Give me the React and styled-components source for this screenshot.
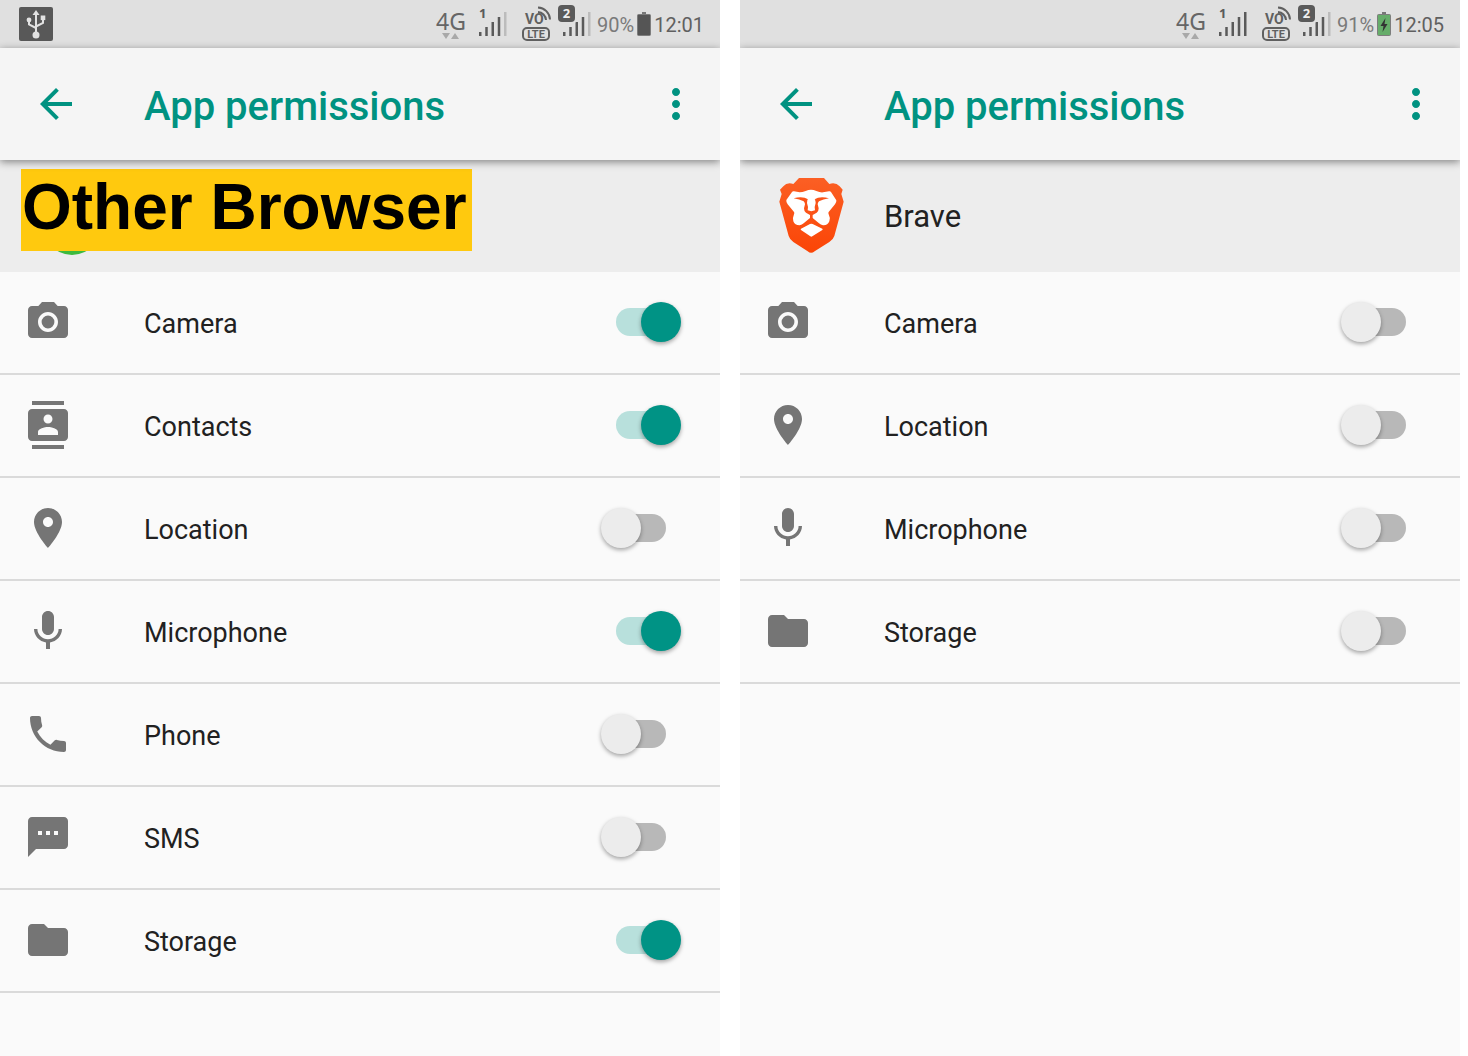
import React from "react";
import styled, { createGlobalStyle } from "styled-components";

const GlobalStyle = createGlobalStyle`
  * { box-sizing: border-box; }
  body {
    margin: 0;
    background: #ffffff;
    color: #212121;
    font-family: Roboto, "Noto Sans", sans-serif;
  }
`;

const Page = styled.main`
  display: grid;
  grid-template-columns: 1fr 1fr;
  gap: 20px;
  min-height: 100vh;
  padding-right: 8px;
`;

const Screen = styled.section`
  display: flex;
  flex-direction: column;
  background: #fafafa;
  overflow: hidden;
`;

const StatusBar = styled.div`
  display: flex;
  align-items: center;
  gap: 3px;
  height: 48px;
  padding: 0 16px 0 19px;
  background: #e0e0e0;
  color: #666666;
  font-size: 20px;
  line-height: 24px;
`;

const Notifications = styled.div`
  display: flex;
  margin-right: auto;
`;

const StatusText = styled.span`
  padding-top: 2px;
  color: ${(p) => (p.$muted ? "#7a7a7a" : "#606060")};
`;

const NetworkType = styled.span`
  display: flex;
  flex-direction: column;
  align-items: center;
  width: 32px;
  padding-top: 2px;
  color: #666666;
  font-family: "Noto Sans", sans-serif;
  font-size: 23px;
  line-height: 23px;
`;

const AppBar = styled.header`
  display: flex;
  align-items: center;
  height: 112px;
  padding: 0 20px 0 32px;
  background: #f5f5f5;
  box-shadow: 0 2px 8px rgba(0, 0, 0, 0.45);
  z-index: 1;
`;

const IconButton = styled.button`
  display: flex;
  padding: 0;
  border: 0;
  background: none;
  color: #009281;
  cursor: pointer;
`;

const Title = styled.h1`
  flex: 1;
  margin: 0;
  padding: 6px 0 0 64px;
  color: #009281;
  font-size: 40px;
  font-weight: 500;
  line-height: 48px;
`;

const AppHeader = styled.div`
  position: relative;
  display: flex;
  align-items: center;
  height: 112px;
  padding-left: 39px;
  background: #ededed;
`;

const AppName = styled.h2`
  margin: 0;
  padding: 2px 0 0 39px;
  font-size: 31px;
  font-weight: 400;
  line-height: 40px;
`;

const GreenLogo = styled.span`
  width: 66px;
  height: 77px;
  border-radius: 50%;
  background: #3dba3d;
`;

const Banner = styled.strong`
  position: absolute;
  top: 9px;
  left: 21px;
  height: 82px;
  padding: 0 5px 0 1px;
  background: #ffc90e;
  color: #000000;
  font-family: "Liberation Sans", Arial, sans-serif;
  font-size: 64px;
  font-weight: 700;
  line-height: 76px;
  white-space: nowrap;
`;

const List = styled.ul`
  margin: 0;
  padding: 0;
  list-style: none;
`;

const Row = styled.label`
  display: flex;
  align-items: center;
  height: 103px;
  padding: 0 54px 1px 24px;
  border-bottom: 2px solid #dadada;
  color: #757575;
  cursor: pointer;
`;

const RowLabel = styled.span`
  flex: 1;
  padding: 4px 0 0 72px;
  color: #212121;
  font-size: 27px;
  line-height: 32px;
`;

const Switch = styled.input`
  position: relative;
  appearance: none;
  width: 50px;
  height: 28px;
  margin: 0;
  border-radius: 14px;
  background: #b8b8b8;
  cursor: pointer;

  &::before {
    content: "";
    position: absolute;
    top: -6px;
    left: -15px;
    width: 40px;
    height: 40px;
    border-radius: 50%;
    background: #ececec;
    box-shadow: 0 2px 4px rgba(0, 0, 0, 0.35);
  }

  &:checked {
    background: #b8e0dc;
  }

  &:checked::before {
    left: 25px;
    background: #009385;
  }
`;

const materialPaths = {
  back: "M20 11H7.83l5.59-5.59L12 4l-8 8 8 8 1.41-1.41L7.83 13H20v-2z",
  more: "M12 8c1.1 0 2-.9 2-2s-.9-2-2-2-2 .9-2 2 .9 2 2 2zm0 2c-1.1 0-2 .9-2 2s.9 2 2 2 2-.9 2-2-.9-2-2-2zm0 6c-1.1 0-2 .9-2 2s.9 2 2 2 2-.9 2-2-.9-2-2-2z",
  camera:
    "M12 8.8a3.2 3.2 0 1 0 0 6.4a3.2 3.2 0 1 0 0-6.4zM9 2L7.17 4H4c-1.1 0-2 .9-2 2v12c0 1.1.9 2 2 2h16c1.1 0 2-.9 2-2V6c0-1.1-.9-2-2-2h-3.17L15 2H9zm3 15c-2.76 0-5-2.24-5-5s2.24-5 5-5 5 2.24 5 5-2.24 5-5 5z",
  contacts:
    "M20 0H4v2h16V0zM4 24h16v-2H4v2zM20 4H4c-1.1 0-2 .9-2 2v12c0 1.1.9 2 2 2h16c1.1 0 2-.9 2-2V6c0-1.1-.9-2-2-2zm-8 2.75c1.24 0 2.25 1.01 2.25 2.25s-1.01 2.25-2.25 2.25S9.75 10.24 9.75 9 10.76 6.75 12 6.75zM17 17H7v-1.5c0-1.67 3.33-2.5 5-2.5s5 .83 5 2.5V17z",
  location:
    "M12 2C8.13 2 5 5.13 5 9c0 5.25 7 13 7 13s7-7.75 7-13c0-3.87-3.13-7-7-7zm0 9.5c-1.38 0-2.5-1.12-2.5-2.5s1.12-2.5 2.5-2.5 2.5 1.12 2.5 2.5-1.12 2.5-2.5 2.5z",
  microphone:
    "M12 14c1.66 0 2.99-1.34 2.99-3L15 5c0-1.66-1.34-3-3-3S9 3.34 9 5v6c0 1.66 1.34 3 3 3zm5.3-3c0 3-2.54 5.1-5.3 5.1S6.7 14 6.7 11H5c0 3.41 2.72 6.23 6 6.72V21h2v-3.28c3.28-.48 6-3.3 6-6.72h-1.7z",
  phone:
    "M6.62 10.79c1.44 2.83 3.76 5.14 6.59 6.59l2.2-2.2c.27-.27.67-.36 1.02-.24 1.12.37 2.33.57 3.57.57.55 0 1 .45 1 1V20c0 .55-.45 1-1 1-9.39 0-17-7.61-17-17 0-.55.45-1 1-1h3.5c.55 0 1 .45 1 1 0 1.25.2 2.45.57 3.57.11.35.03.74-.25 1.02l-2.2 2.2z",
  sms: "M20 2H4c-1.1 0-1.99.9-1.99 2L2 22l4-4h14c1.1 0 2-.9 2-2V4c0-1.1-.9-2-2-2zM9 11H7V9h2v2zm4 0h-2V9h2v2zm4 0h-2V9h2v2z",
  storage:
    "M10 4H4c-1.1 0-1.99.9-1.99 2L2 18c0 1.1.9 2 2 2h16c1.1 0 2-.9 2-2V8c0-1.1-.9-2-2-2h-8l-2-2z",
};

function Icon({ name }) {
  return (
    <svg width="48" height="48" viewBox="0 0 24 24" fill="currentColor" aria-hidden="true">
      <path d={materialPaths[name]} />
    </svg>
  );
}

function UsbIcon() {
  return (
    <svg width="34" height="34" viewBox="0 0 34 34" aria-label="USB connected">
      <rect width="34" height="34" rx="2" fill="#585858" />
      <g fill="none" stroke="#e2e2e2" strokeWidth="2">
        <path d="M17 7V27M17 21L10 17.500V13M17 19.500L24 16V12" />
      </g>
      <g fill="#e2e2e2">
        <path d="M17 3L20.500 8H13.500Z" />
        <rect x="21.700" y="8.500" width="4.600" height="4.600" />
        <circle cx="10" cy="13" r="2.400" />
        <circle cx="17" cy="28" r="3.500" />
      </g>
    </svg>
  );
}

function DataArrows() {
  return (
    <svg width="18" height="7" viewBox="0 0 18 7" fill="#a9a9a9" aria-hidden="true">
      <path d="M0 0H8L4 6ZM9 6H17L13 0Z" />
    </svg>
  );
}

const barTops = [32, 27, 22, 17, 12];

function SignalBars({ x, strength }) {
  return barTops.map((top, i) => (
    <rect
      key={top}
      x={x + i * 6.25}
      y={top}
      width="2.500"
      height={36 - top}
      fill={i < strength ? "#5a5a5a" : "#bcbcbc"}
    />
  ));
}

function SimOne({ strength }) {
  return (
    <svg width="44" height="48" viewBox="0 0 44 48" aria-label="SIM 1 signal">
      <SignalBars x={9} strength={strength} />
      <text x="9" y="18" fontFamily="Noto Sans" fontSize="13" fontWeight="700" fill="#5a5a5a">1</text>
    </svg>
  );
}

function SimTwo() {
  return (
    <svg width="37" height="48" viewBox="0 0 37 48" aria-label="SIM 2 signal">
      <SignalBars x={6} strength={4} />
      <rect x="0" y="4" width="19" height="20" rx="4" fill="#e0e0e0" />
      <rect x="1" y="5" width="17" height="17" rx="4" fill="#5a5a5a" />
      <text x="9.500" y="18" textAnchor="middle" fontFamily="Noto Sans" fontSize="13" fontWeight="700" fill="#f0f0f0">2</text>
    </svg>
  );
}

function VolteIcon() {
  return (
    <svg width="37" height="48" viewBox="0 0 37 48" fontFamily="Roboto" fontWeight="700" fill="#606060" aria-label="VoLTE">
      <text x="8" y="24" fontSize="14" fontWeight="700">VO</text>
      <g fill="none" stroke="#606060" strokeWidth="2">
        <path d="M21 12A8.500 8.500 0 0 1 29 20M21 7.500A12.500 12.500 0 0 1 33 19.500" />
        <rect x="6" y="28" width="26" height="12" rx="4" />
      </g>
      <text x="19" y="38" textAnchor="middle" fontSize="11">LTE</text>
    </svg>
  );
}

function BatteryIcon({ charging }) {
  return (
    <svg width="14" height="48" viewBox="0 0 14 48" aria-label="Battery">
      <rect x="5" y="12" width="4" height="2" fill="#777777" />
      <rect x="0.500" y="14.500" width="13" height="21" rx="1" fill={charging ? "#66ad6a" : "#555555"} stroke="#7d7d7d" />
      {charging && <path d="M8.500 18L3.500 26H6.500L5.500 32L10.500 24H7.500Z" fill="#333333" />}
    </svg>
  );
}

function BraveLogo() {
  return (
    <svg width="66" height="78" viewBox="18 14 198 234" role="img" aria-label="Brave logo">
      <defs>
        <linearGradient id="braveFill" x1="0" y1="0" x2="0" y2="1">
          <stop offset="0" stopColor="#fb5f24" />
          <stop offset="1" stopColor="#fb4506" />
        </linearGradient>
      </defs>
      <path
        fill="url(#braveFill)"
        d="M78 17H153L169 35Q188 29 200 42L209 52L205 65L212 88L184 191Q181 201 169 209L125 237Q114 246 104 237L61 209Q50 201 47 191L19 88L26 65L21 52L31 42Q42 29 61 35Z"
      />
      <path
        fill="#ffffff"
        d="M40 83L57 59Q59 56 63 57L80 60Q88 60 98 56Q114 49 130 56Q142 61 150 60L168 57Q172 56 174 59L190 84Q191 90 186 96L167 119Q165 122 167 126Q173 137 169 147Q164 160 150 159Q143 158 138 153L119 137Q115 134 111 137L92 153Q87 158 80 159Q65 159 61 147Q58 137 63 126Q65 122 63 119L44 96Q39 90 40 83Z"
      />
      <path
        fill="#fb5318"
        d="M62 78Q80 72 95 76L105 81Q102 86 102 92L105 104L104 114L115 117L126 114L125 104L128 92Q128 86 125 81L135 76Q150 72 168 78Q150 81 138 87Q134 91 134 96L137 108Q137 118 131 121L119 128V141H111V128L99 121Q93 118 93 108L96 96Q96 91 92 87Q80 81 62 78Z"
      />
      <path fill="#ffffff" d="M103 82L115 79L127 82Q123 89 123 95L122 109Q120 114 115 115Q110 114 108 109L107 95Q107 89 103 82Z" />
      <path fill="#ffffff" d="M84 169L111 155Q115 153 119 155L148 169Q150 171 148 173L118 192Q115 194 112 192L84 173Q82 171 84 169Z" />
    </svg>
  );
}

function PermissionScreen({ idPrefix, usb, simOne, battery, charging, time, header, permissions }) {
  return (
    <Screen>
      <StatusBar>
        <Notifications>{usb && <UsbIcon />}</Notifications>
        <NetworkType>
          4G
          <DataArrows />
        </NetworkType>
        <SimOne strength={simOne} />
        <VolteIcon />
        <SimTwo />
        <StatusText $muted>{battery}</StatusText>
        <BatteryIcon charging={charging} />
        <StatusText>{time}</StatusText>
      </StatusBar>
      <AppBar>
        <IconButton type="button" aria-label="Back">
          <Icon name="back" />
        </IconButton>
        <Title>App permissions</Title>
        <IconButton type="button" aria-label="More options">
          <Icon name="more" />
        </IconButton>
      </AppBar>
      <AppHeader>{header}</AppHeader>
      <List>
        {permissions.map(([icon, label, on]) => (
          <li key={icon}>
            <Row htmlFor={`${idPrefix}-${icon}`}>
              <Icon name={icon} />
              <RowLabel>{label}</RowLabel>
              <Switch id={`${idPrefix}-${icon}`} type="checkbox" role="switch" defaultChecked={on} />
            </Row>
          </li>
        ))}
      </List>
    </Screen>
  );
}

const otherPermissions = [
  ["camera", "Camera", true],
  ["contacts", "Contacts", true],
  ["location", "Location", false],
  ["microphone", "Microphone", true],
  ["phone", "Phone", false],
  ["sms", "SMS", false],
  ["storage", "Storage", true],
];

const bravePermissions = [
  ["camera", "Camera", false],
  ["location", "Location", false],
  ["microphone", "Microphone", false],
  ["storage", "Storage", false],
];

export default function App() {
  return (
    <>
      <GlobalStyle />
      <Page>
        <PermissionScreen
          idPrefix="other"
          usb
          simOne={4}
          battery="90%"
          time="12:01"
          permissions={otherPermissions}
          header={
            <>
              <GreenLogo />
              <Banner>Other Browser</Banner>
            </>
          }
        />
        <PermissionScreen
          idPrefix="brave"
          simOne={5}
          battery="91%"
          charging
          time="12:05"
          permissions={bravePermissions}
          header={
            <>
              <BraveLogo />
              <AppName>Brave</AppName>
            </>
          }
        />
      </Page>
    </>
  );
}
